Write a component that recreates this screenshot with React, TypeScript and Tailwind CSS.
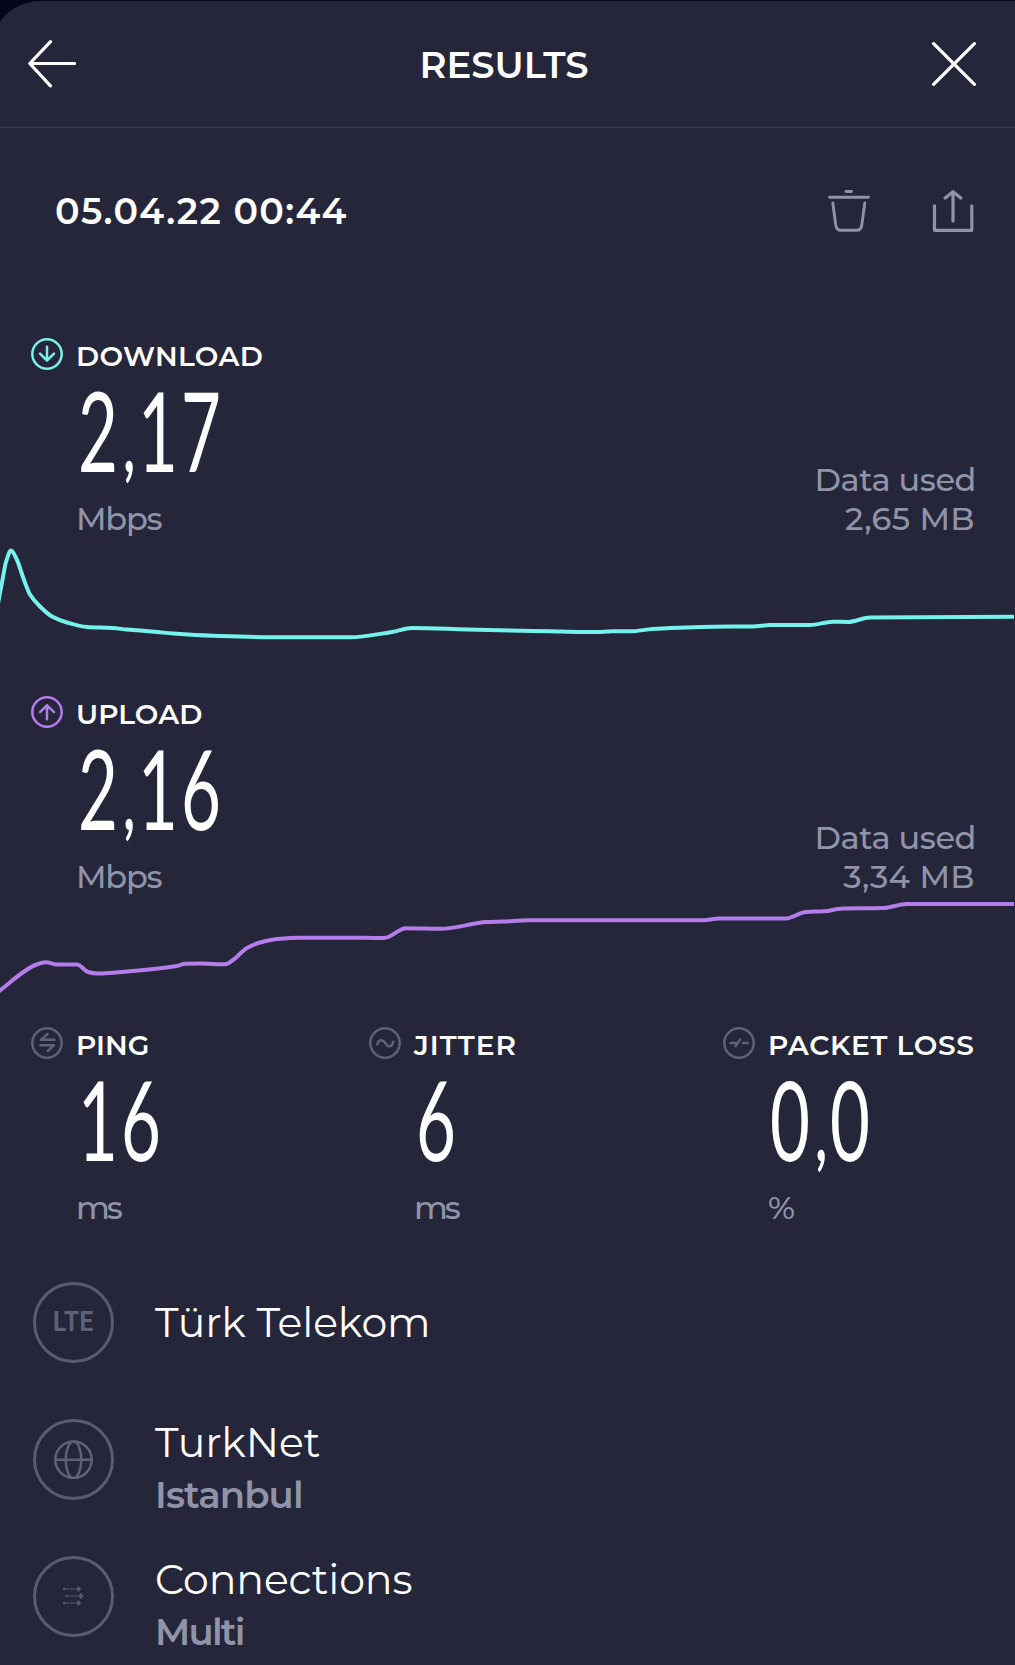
import type { ReactNode } from 'react';

type Point = [number, number];

const downloadPoints: Point[] = [
  [-3, 609], [0, 593], [3, 577], [6, 562], [11, 550.5], [17, 560], [23.3, 578], [30, 594.5], [40, 606.5], [52, 616.5],
  [67, 622.5], [87, 627], [112, 628], [127, 629.5], [157, 632], [173, 633.5], [213, 635.7], [283, 637.3],
  [350, 637.3], [392, 632], [412, 628], [467, 629.5], [510, 630.5], [550, 631.3], [583, 632], [597, 632],
  [612, 631.3], [630, 631.3], [653, 629], [713, 626.7], [753, 626.5], [770, 625], [810, 625], [833, 621.7],
  [848, 622], [870, 617.5], [1014, 616.7],
];

const uploadPoints: Point[] = [
  [-4, 994], [0, 990.5], [36.7, 964.5], [46, 962.3], [56.7, 964.5], [77, 964.5], [88, 972], [97, 973.5],
  [133, 971], [177, 966], [185, 963.7], [200, 963.5], [225, 964.3], [233, 960], [247, 948], [260, 942.5],
  [277, 939], [300, 937.7], [364, 937.8], [384, 938], [406, 928.3], [441, 928.8], [487, 922], [503, 921.5],
  [528, 920.3], [701, 920.3], [719.5, 918.5], [785.6, 918.5], [806, 912], [824, 911.3], [842.6, 908.5],
  [883.7, 908], [906.5, 904], [1014, 904],
];

// Monotone cubic curve, so flat parts stay flat between samples
const toPath = (points: Point[]) => {
  const slopes = points.slice(1).map(([x, y], i) => (y - points[i][1]) / (x - points[i][0]));
  const tangents = points.map((_, i) => {
    if (i === 0) return slopes[0];
    if (i === points.length - 1) return slopes[i - 1];
    const a = slopes[i - 1];
    const b = slopes[i];
    return a * b <= 0 ? 0 : (2 * a * b) / (a + b);
  });
  let d = `M${points[0][0]} ${points[0][1]}`;
  for (let i = 1; i < points.length; i++) {
    const [x0, y0] = points[i - 1];
    const [x1, y1] = points[i];
    const h = (x1 - x0) / 3;
    d += `C${x0 + h} ${y0 + tangents[i - 1] * h} ${x1 - h} ${y1 - tangents[i] * h} ${x1} ${y1}`;
  }
  return d;
};

interface MetricProps {
  icon: ReactNode;
  iconClass: string;
  label: string;
  value: string;
  unit: string;
  labelClass?: string;
  unitClass?: string;
  dataUsed?: string;
}

const Metric = ({ icon, iconClass, label, value, unit, labelClass = '', unitClass = '', dataUsed }: MetricProps) => {
  const [whole, fraction] = value.split(',');

  return (
    <div className="flex h-[200px] gap-[13px]">
      <svg className={`h-8 w-8 shrink-0 ${iconClass}`} viewBox="0 0 32 32" fill="none" stroke="currentColor" strokeWidth="2.5" strokeLinecap="round" strokeLinejoin="round">
        <circle cx="16" cy="16" r="14.7" />
        {icon}
      </svg>
      <div className="flex flex-1 flex-col">
        <h2 className={`pt-1 text-[28px] leading-7 font-semibold whitespace-nowrap ${labelClass}`}>{label}</h2>
        <p className="mt-[9px] ml-[2px] origin-left scale-x-[.62] font-['Lato',sans-serif] text-[111px] leading-[100px] tracking-[5px] whitespace-nowrap">
          {whole}
          {fraction && <span className="ml-[4px] text-[78px] leading-[0] font-bold">,</span>}
          {fraction}
        </p>
        <div className="-mt-[19px] flex h-[78px] items-end justify-between text-[32px] leading-[39px] font-medium text-[#9193a8]">
          <span className={unitClass}>{unit}</span>
          {dataUsed && (
            <div className="text-right">
              <p className="-mr-px tracking-[-0.4px]">Data used</p>
              <p className="tracking-[0.4px]">{dataUsed}</p>
            </div>
          )}
        </div>
      </div>
    </div>
  );
};

interface InfoRowProps {
  icon: ReactNode;
  title: string;
  subtitle?: string;
  subtitleClass?: string;
}

const InfoRow = ({ icon, title, subtitle, subtitleClass = '' }: InfoRowProps) => (
  <div className="flex h-[81px] items-start gap-[41.5px]">
    <div className="flex h-[81px] w-[81px] shrink-0 items-center justify-center rounded-full border-3 border-[#595b70] text-[#5f6176]">
      {icon}
    </div>
    <div className={subtitle ? '-mt-[3px]' : 'mt-[14px]'}>
      <p className="text-[41px] leading-[52px] tracking-[-0.1px]">{title}</p>
      {subtitle && <p className={`mt-px text-[37px] leading-[52px] font-semibold text-[#9193a8] ${subtitleClass}`}>{subtitle}</p>}
    </div>
  </div>
);

export default function App() {
  return (
    <div className="relative h-[1665px] w-[1015px] overflow-hidden border-t border-[#05061a] bg-[#25263a] font-['Montserrat','Inter',sans-serif] text-white">
      <svg className="absolute top-0 left-0 h-6 w-11" viewBox="0 0 44 24">
        <path d="M0 0H40A49 49 0 0 0 0 21Z" fill="#05061a" />
      </svg>

      <header className="flex h-[127px] items-center justify-between border-b border-[#3a3b50] pr-[39px] pl-7">
        <svg className="h-12 w-12" viewBox="0 0 48 48" fill="none" stroke="currentColor" strokeWidth="3.2" strokeLinecap="round" strokeLinejoin="round">
          <path d="M22.5 1.7L1.8 23.5L22.5 45.8M1.8 23.5H46.5" />
        </svg>
        <h1 className="text-[37px] leading-none font-semibold">RESULTS</h1>
        <svg className="h-11 w-11" viewBox="0 0 44 44" fill="none" stroke="currentColor" strokeWidth="3.2" strokeLinecap="round">
          <path d="M1.6 1.6L42.4 42.4M42.4 1.6L1.6 42.4" />
        </svg>
      </header>

      <div className="mt-[62px] flex h-[42px] items-center pr-[41px] pl-[55px] text-[#9193a8]">
        <p className="flex-1 text-[36.5px] leading-none font-semibold tracking-[1.35px] text-white">05.04.22 00:44</p>
        <svg className="mr-[62px] h-[42px] w-[42px]" viewBox="0 0 42 42" fill="none" stroke="currentColor" strokeWidth="2.9" strokeLinecap="round" strokeLinejoin="round">
          <path d="M18 1.5H23.5M1.5 7.3H40.5M4.8 13L7.8 35.5Q8.6 40.3 13 40.3H28.5Q33 40.3 33.7 35.5L36.8 13" />
        </svg>
        <svg className="h-[42px] w-[42px]" viewBox="0 0 42 42" fill="none" stroke="currentColor" strokeWidth="3.2" strokeLinecap="round" strokeLinejoin="round">
          <path d="M2.5 15.8V40.3H39.8V15.8M21 31V1.7M13.2 8L21 1.7L28.8 8" />
        </svg>
      </div>

      <section className="mt-[106px] h-[358px]">
        <div className="pr-10 pl-[31px]">
          <Metric
            icon={<path d="M16 8.8V22.5M9 15.7L16 22.5L23 15.7" />}
            iconClass="text-[#75f2ec]"
            label="DOWNLOAD"
            labelClass="tracking-[0.4px]"
            value="2,17"
            unit="Mbps"
            unitClass="tracking-[-1.2px]"
            dataUsed="2,65 MB"
          />
        </div>
        <svg className="block h-[158px] w-full" viewBox="0 538 1015 158" fill="none">
          <path d={toPath(downloadPoints)} stroke="#75f2ec" strokeWidth="4" />
        </svg>
      </section>

      <section className="h-[331px]">
        <div className="pr-10 pl-[31px]">
          <Metric
            icon={<path d="M16 23.2V9.3M9 16.2L16 9.3L23 16.2" />}
            iconClass="text-[#b47de9]"
            label="UPLOAD"
            labelClass="tracking-[0.1px]"
            value="2,16"
            unit="Mbps"
            unitClass="tracking-[-1.2px]"
            dataUsed="3,34 MB"
          />
        </div>
        <svg className="block h-[131px] w-full" viewBox="0 896 1015 131" fill="none">
          <path d={toPath(uploadPoints)} stroke="#b47de9" strokeWidth="4" />
        </svg>
      </section>

      <section className="grid grid-cols-[338px_354px_1fr] pl-[31px]">
        <Metric
          icon={<path d="M16.5 7L10 12.8H23.5M9.5 18.2H23L16.8 24" />}
          iconClass="text-[#5f6176]"
          label="PING"
          value="16"
          unit="ms"
          unitClass="tracking-[-3px]"
        />
        <Metric
          icon={<path d="M8.3 17.5C9.8 12 13.5 12 16.3 16.2S23 20.5 24.3 14.7" />}
          iconClass="text-[#5f6176]"
          label="JITTER"
          labelClass="tracking-[1px]"
          value="6"
          unit="ms"
          unitClass="tracking-[-3px]"
        />
        <Metric
          icon={<path d="M7.5 16H13.5M12.5 19.3L17 12.5M20 16H24.5" />}
          iconClass="text-[#5f6176]"
          label="PACKET LOSS"
          labelClass="tracking-[0.7px]"
          value="0,0"
          unit="%"
        />
      </section>

      <section className="mt-[54.5px] flex flex-col gap-14 pl-[32.5px]">
        <InfoRow
          icon={<span className="scale-x-[.87] font-['Roboto',sans-serif] text-[28px] leading-none font-bold tracking-[0.5px]">LTE</span>}
          title="Türk Telekom"
        />
        <InfoRow
          icon={
            <svg className="h-10 w-10" viewBox="0 0 40 40" fill="none" stroke="currentColor" strokeWidth="2.5">
              <circle cx="20.5" cy="20.8" r="18.2" />
              <ellipse cx="20.5" cy="20.8" rx="7.8" ry="18.2" />
              <path d="M2.3 20.8H38.7" />
            </svg>
          }
          title="TurkNet"
          subtitle="Istanbul"
          subtitleClass="tracking-[-0.9px]"
        />
        <InfoRow
          icon={
            <svg className="h-5 w-5" viewBox="0 0 20 20" fill="none" stroke="currentColor" strokeWidth="1.4">
              <path d="M0 3H16M2.5 10H18.5M0 17H16" strokeDasharray="3 1.3 1.5 1.3 1.5 1.3 1.5 1.3 5" />
              <path d="M14.5 0.5L17.2 3L14.5 5.5M17 7.5L19.7 10L17 12.5M14.5 14.5L17.2 17L14.5 19.5" />
            </svg>
          }
          title="Connections"
          subtitle="Multi"
          subtitleClass="tracking-[-1.8px]"
        />
      </section>
    </div>
  );
}
